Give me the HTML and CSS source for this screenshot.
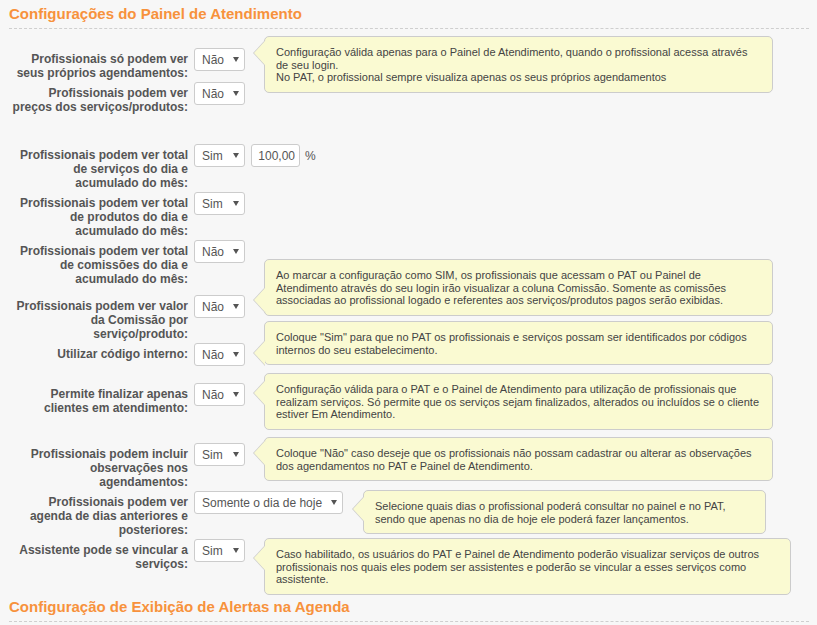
FILE: index.html
```html
<!DOCTYPE html>
<html lang="pt-BR">
<head>
<meta charset="utf-8">
<title>Configurações do Painel de Atendimento</title>
<link rel="stylesheet" href="styles.css">
</head>
<body>
<div class="page">
  <h2 class="section-title">Configurações do Painel de Atendimento</h2>

  <div class="form">
    <div class="row">
      <label class="lbl">Profissionais só podem ver seus próprios agendamentos:</label>
      <div class="ctrl"><span class="sel"><select><option>Não</option><option>Sim</option></select></span></div>
      <div class="tip tip-1">Configuração válida apenas para o Painel de Atendimento, quando o profissional acessa através de seu login.<br>No PAT, o profissional sempre visualiza apenas os seus próprios agendamentos</div>
    </div>

    <div class="row">
      <label class="lbl">Profissionais podem ver preços dos serviços/produtos:</label>
      <div class="ctrl"><span class="sel"><select><option>Não</option><option>Sim</option></select></span></div>
    </div>

    <div class="row row-gap-lg">
      <label class="lbl">Profissionais podem ver total de serviços do dia e acumulado do mês:</label>
      <div class="ctrl">
        <span class="sel"><select><option>Sim</option><option>Não</option></select></span>
        <input class="num" type="text" value="100,00">
        <span class="unit">%</span>
      </div>
    </div>

    <div class="row">
      <label class="lbl">Profissionais podem ver total de produtos do dia e acumulado do mês:</label>
      <div class="ctrl"><span class="sel"><select><option>Sim</option><option>Não</option></select></span></div>
    </div>

    <div class="row">
      <label class="lbl">Profissionais podem ver total de comissões do dia e acumulado do mês:</label>
      <div class="ctrl"><span class="sel"><select><option>Não</option><option>Sim</option></select></span></div>
    </div>

    <div class="row row-gap-sm">
      <label class="lbl">Profissionais podem ver valor da Comissão por serviço/produto:</label>
      <div class="ctrl"><span class="sel"><select><option>Não</option><option>Sim</option></select></span></div>
      <div class="tip tip-2">Ao marcar a configuração como SIM, os profissionais que acessam o PAT ou Painel de Atendimento através do seu login irão visualizar a coluna Comissão. Somente as comissões associadas ao profissional logado e referentes aos serviços/produtos pagos serão exibidas.</div>
    </div>

    <div class="row">
      <label class="lbl">Utilizar código interno:</label>
      <div class="ctrl"><span class="sel"><select><option>Não</option><option>Sim</option></select></span></div>
      <div class="tip tip-3">Coloque "Sim" para que no PAT os profissionais e serviços possam ser identificados por códigos internos do seu estabelecimento.</div>
    </div>

    <div class="row row-gap-md">
      <label class="lbl">Permite finalizar apenas clientes em atendimento:</label>
      <div class="ctrl"><span class="sel"><select><option>Não</option><option>Sim</option></select></span></div>
      <div class="tip tip-4">Configuração válida para o PAT e o Painel de Atendimento para utilização de profissionais que realizam serviços. Só permite que os serviços sejam finalizados, alterados ou incluídos se o cliente estiver Em Atendimento.</div>
    </div>

    <div class="row row-gap-lg2">
      <label class="lbl">Profissionais podem incluir observações nos agendamentos:</label>
      <div class="ctrl"><span class="sel"><select><option>Sim</option><option>Não</option></select></span></div>
      <div class="tip tip-5">Coloque "Não" caso deseje que os profissionais não possam cadastrar ou alterar as observações dos agendamentos no PAT e Painel de Atendimento.</div>
    </div>

    <div class="row">
      <label class="lbl">Profissionais podem ver agenda de dias anteriores e posteriores:</label>
      <div class="ctrl"><span class="sel sel-wide"><select><option>Somente o dia de hoje</option></select></span></div>
      <div class="tip tip-6">Selecione quais dias o profissional poderá consultar no painel e no PAT, sendo que apenas no dia de hoje ele poderá fazer lançamentos.</div>
    </div>

    <div class="row">
      <label class="lbl">Assistente pode se vincular a serviços:</label>
      <div class="ctrl"><span class="sel"><select><option>Sim</option><option>Não</option></select></span></div>
      <div class="tip tip-7">Caso habilitado, os usuários do PAT e Painel de Atendimento poderão visualizar serviços de outros profissionais nos quais eles podem ser assistentes e poderão se vincular a esses serviços como assistente.</div>
    </div>
  </div>

  <h2 class="section-title section-next">Configuração de Exibição de Alertas na Agenda</h2>
</div>
</body>
</html>
```

FILE: styles.css
```css
html, body {
  margin: 0;
  padding: 0;
  background: #f7f7f7;
}

body {
  font-family: "Liberation Sans", Arial, sans-serif;
  color: #555;
  overflow: hidden;
}

.page {
  padding: 0 8px 0 9px;
}

.section-title {
  margin: 0;
  padding: 5px 0 5px;
  font-size: 15px;
  line-height: 18px;
  font-weight: bold;
  color: #f7923c;
  border-bottom: 1px dashed #cfcfcf;
}

.section-next {
  margin-top: 22px;
}

.form {
  margin-top: 19px;
}

.row {
  position: relative;
  display: flex;
  align-items: flex-start;
  gap: 6px;
  margin-bottom: 2px;
}

.row-gap-sm { margin-top: 9px; }
.row-gap-md { margin-top: 17px; }
.row-gap-lg { margin-top: 30px; }
.row-gap-lg2 { margin-top: 28px; }

.lbl {
  flex: 0 0 179px;
  width: 179px;
  padding-top: 4px;
  text-align: right;
  font-size: 12px;
  line-height: 14px;
  font-weight: bold;
  color: #555;
}

.ctrl {
  display: flex;
  align-items: center;
  gap: 6px;
}

.sel {
  position: relative;
  display: block;
}

.sel select {
  -webkit-appearance: none;
  appearance: none;
  display: block;
  box-sizing: border-box;
  width: 51px;
  height: 23px;
  margin: 0;
  padding: 0 0 0 7px;
  border: 1px solid #ccc;
  border-radius: 3px;
  background: #fff;
  font-family: "Liberation Sans", Arial, sans-serif;
  font-size: 12px;
  color: #555;
  outline: none;
}

.sel::after {
  content: "";
  position: absolute;
  right: 6px;
  top: 9px;
  border-left: 3.5px solid transparent;
  border-right: 3.5px solid transparent;
  border-top: 5px solid #555;
  pointer-events: none;
}

.sel-wide select {
  width: 149px;
}

.num {
  box-sizing: border-box;
  width: 49px;
  height: 23px;
  margin: 0;
  padding: 0 4px;
  border: 1px solid #ccc;
  border-radius: 3px;
  background: #fff;
  text-align: right;
  font-family: "Liberation Sans", Arial, sans-serif;
  font-size: 12px;
  color: #555;
  outline: none;
}

.unit {
  margin-left: -1px;
  font-size: 12px;
  color: #555;
}

.tip {
  --tail: 16px;
  position: absolute;
  left: 255px;
  width: 509px;
  box-sizing: border-box;
  padding: 9px 11px 8px 11px;
  border: 1px solid #cccccc;
  border-radius: 5px;
  background: #fafad2;
  font-size: 11px;
  line-height: 1.15;
  color: #444;
}

.tip::before,
.tip::after {
  content: "";
  position: absolute;
  border-style: solid;
  width: 0;
  height: 0;
}

.tip::before {
  left: -12px;
  top: calc(var(--tail) - 13px);
  border-width: 13px 12px 13px 0;
  border-color: transparent #cccccc transparent transparent;
}

.tip::after {
  left: -11px;
  top: calc(var(--tail) - 12px);
  border-width: 12px 11px 12px 0;
  border-color: transparent #fafad2 transparent transparent;
}

.tip-1 { top: -12px; --tail: 16px; }
.tip-2 { top: -36px; --tail: 40px; }
.tip-3 { top: -22px; --tail: 31px; }
.tip-4 { top: -10px; --tail: 19px; }
.tip-5 { top: -6px; --tail: 15px; }
.tip-6 { top: -1px; left: 354px; width: 403px; --tail: 18px; }
.tip-7 { top: -1px; width: 527px; --tail: 19px; }
```
